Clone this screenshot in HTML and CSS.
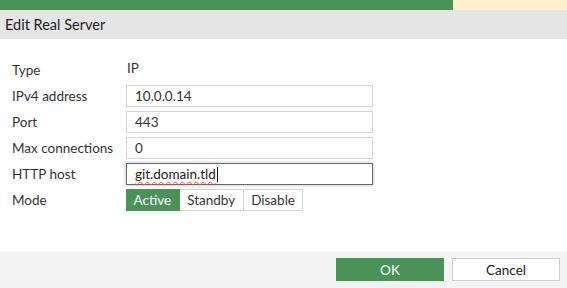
FILE: index.html
```html
<!DOCTYPE html>
<html lang="en">
<head>
  <meta charset="UTF-8" />
  <title>Edit Real Server</title>
  <link rel="stylesheet" href="styles.css">
</head>
<body>
  <div class="progress">
    <div class="progress-done"></div>
  </div>

  <div class="dialog-title">Edit Real Server</div>

  <div class="dialog-body">
    <div class="form">
      <label class="form-label">Type</label>
      <div class="form-value">IP</div>

      <label class="form-label">IPv4 address</label>
      <input class="field" type="text" value="10.0.0.14">

      <label class="form-label">Port</label>
      <input class="field" type="text" value="443">

      <label class="form-label">Max connections</label>
      <input class="field" type="text" value="0">

      <label class="form-label">HTTP host</label>
      <div class="field field-focus"><span class="misspelled">git.domain.tld</span><span class="caret"></span></div>

      <label class="form-label">Mode</label>
      <div class="toggle">
        <button class="toggle-btn active">Active</button>
        <button class="toggle-btn">Standby</button>
        <button class="toggle-btn">Disable</button>
      </div>
    </div>
  </div>

  <div class="dialog-footer">
    <button class="btn btn-primary">OK</button>
    <button class="btn">Cancel</button>
  </div>
</body>
</html>
```

FILE: styles.css
```css
* {
  margin: 0;
  padding: 0;
  box-sizing: border-box;
}

body {
  font-family: 'Lato', 'Open Sans', sans-serif;
  font-size: 13.5px;
  color: #333;
  background: white;
  height: 288px;
  display: flex;
  flex-direction: column;
}

.progress {
  height: 10px;
  background: #fdf0cb;
  display: flex;
}

.progress-done {
  width: 453px;
  background: #4a9358;
}

.dialog-title {
  height: 29px;
  background: #e5e5e5;
  padding-left: 5px;
  font-size: 14.5px;
  display: flex;
  align-items: center;
  color: #222;
}

.dialog-body {
  flex: 1;
  padding: 20px 0 0 12px;
}

.form {
  display: grid;
  grid-template-columns: 114px 247px;
  grid-auto-rows: 22px;
  row-gap: 4px;
  align-items: center;
}

.form-label {
  line-height: 22px;
}

.form-value {
  padding-left: 1px;
  margin-bottom: 5px;
}

.field {
  height: 22px;
  width: 247px;
  border: 1px solid #d4d4d4;
  padding: 0 8px;
  font-family: 'Lato', 'Open Sans', sans-serif;
  font-size: 13.5px;
  color: #333;
  background: white;
  outline: none;
}

.field-focus {
  display: flex;
  align-items: center;
  border-color: #666;
  box-shadow: 0 0 4px rgba(0, 0, 0, 0.25);
  color: #222;
}

.misspelled {
  text-decoration: underline wavy #e44;
  text-decoration-thickness: 1px;
  text-underline-offset: 2px;
}

.caret {
  width: 1px;
  height: 15px;
  background: #111;
  margin-left: 1px;
}

.toggle {
  display: flex;
  height: 22px;
}

.toggle-btn {
  font-family: 'Lato', 'Open Sans', sans-serif;
  font-size: 13.5px;
  color: #333;
  background: white;
  border: 1px solid #d4d4d4;
  border-left: none;
  padding: 0 7.5px;
}

.toggle-btn.active {
  background: #4a9358;
  border-color: #4a9358;
  color: white;
}

.dialog-footer {
  height: 37px;
  background: #f3f3f3;
  display: flex;
  justify-content: flex-end;
  align-items: center;
  gap: 8px;
  padding-right: 7px;
}

.btn {
  width: 108px;
  height: 23px;
  font-family: 'Lato', 'Open Sans', sans-serif;
  font-size: 13.5px;
  color: #222;
  background: white;
  border: 1px solid #ccc;
}

.btn-primary {
  background: #4a9358;
  border-color: #4a9358;
  color: white;
}
```
